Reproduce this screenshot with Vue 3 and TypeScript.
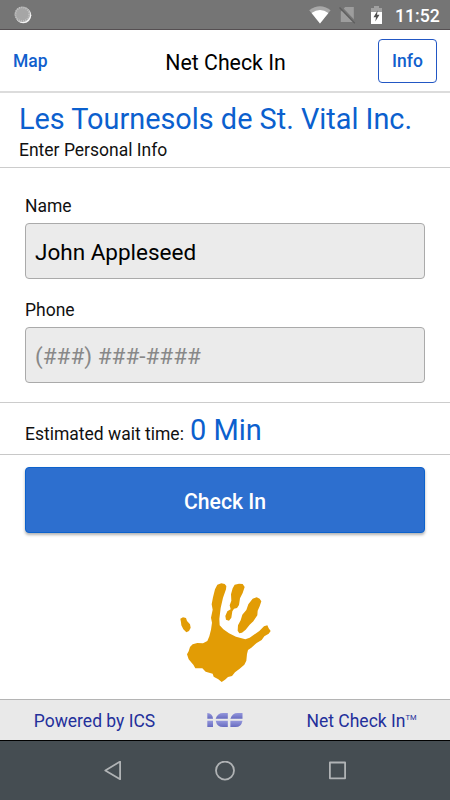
<script setup lang="ts">
import { ref } from 'vue'

const name = ref('John Appleseed')
const phone = ref('')
const waitMinutes = ref(0)
</script>

<template>
  <div class="screen">
    <div class="status">
      <svg class="sync" width="18" height="18" viewBox="0 0 18 18">
        <circle cx="9.3" cy="9.3" r="8" fill="#f5f5f5" />
        <circle cx="8.3" cy="8.3" r="7.8" fill="#a6a6a6" />
        <circle cx="8.3" cy="8.3" r="6.8" fill="none" stroke="#c4c4c4" stroke-width="1.6" stroke-dasharray="1 1.2" />
      </svg>
      <div class="status-icons">
        <svg width="22" height="18" viewBox="0 0 22 18">
          <path d="M0.2 4.2Q11-3.6 21.6 4.2L11 17.4Z" fill="#a8a8a8" />
          <path d="M2.6 7Q11 1.2 19.4 7L11 17.4Z" fill="#fff" />
        </svg>
        <svg class="sim" width="17" height="18" viewBox="0 0 17 18">
          <path d="M6.2 1H14.8V16H1.8V5.8Z" fill="#9d9d9d" />
          <path d="M1.2 0.3L17.2 17.2" stroke="#757575" stroke-width="2" />
          <path d="M0.5 1.5L15.8 17.3" stroke="#5e5e5e" stroke-width="1.4" />
        </svg>
        <svg class="battery" width="11" height="18" viewBox="0 0 11 18">
          <path d="M3 0H8V2H11V7H0V2H3Z" fill="#a0a0a0" />
          <path d="M0 6H11V18H0Z" fill="#fff" />
          <path d="M6.7 4.2L2.5 11.2H5L4.3 15.6L8.5 8.8H6Z" fill="#505050" />
        </svg>
        <span class="clock">11:52</span>
      </div>
    </div>

    <header class="bar">
      <a class="map">Map</a>
      <h1>Net Check In</h1>
      <button class="info">Info</button>
    </header>

    <section class="place">
      <h2>Les Tournesols de St. Vital Inc.</h2>
      <p>Enter Personal Info</p>
    </section>

    <form class="form" @submit.prevent>
      <label for="name">Name</label>
      <input id="name" v-model="name" type="text" />
      <label for="phone">Phone</label>
      <input id="phone" v-model="phone" type="tel" placeholder="(###) ###-####" />
    </form>

    <section class="wait">
      <span>Estimated wait time:</span>
      <strong>{{ waitMinutes }} Min</strong>
    </section>

    <button class="check">Check In</button>

    <div class="hand">
      <svg width="110" height="115" viewBox="0 0 330 345" fill="#e29c05">
        <path d="M142 29L154 25L164 27L169 33L168 43L159 68L152 99L148 132L149 151L160 163L177 175L198 185L226 193L239 188L268 168L282 154L292 151L296 160L302 168L296 176L283 184L275 195L260 204L244 218L234 225L231 237L229 257L223 269L209 281L195 292L186 303L174 306L165 314L155 321L145 313L131 305L128 296L107 290L97 280L76 280L70 269L56 253L51 238L56 229L60 216L68 208L82 204L99 205L112 198L118 184L123 164L126 143L123 128L128 104L125 88L129 67L135 43Z" />
        <path d="M194 29L207 26L218 27L224 36L218 54L210 70L207 90L201 99L192 101L187 109L184 128L177 137L168 134L166 123L172 109L182 103L179 91L184 77L183 58L188 40Z" />
        <path d="M248 71L260 67L269 71L274 79L269 94L263 107L262 121L250 139L239 149L227 164L216 173L208 175L203 167L204 151L212 136L217 119L229 105L235 88Z" />
        <path d="M31 131L39 127L48 129L51 138L60 148L62 158L57 168L49 172L40 163L34 151L33 142Z" />
      </svg>
    </div>

    <footer class="footer">
      <span>Powered by ICS</span>
      <svg class="logo" width="36" height="14" viewBox="0 0 36 14">
        <defs>
          <linearGradient id="logo-fill" x1="0" y1="0" x2="0" y2="1">
            <stop offset="0" stop-color="#9497dc" />
            <stop offset="1" stop-color="#676bc0" />
          </linearGradient>
        </defs>
        <g fill="url(#logo-fill)">
          <path d="M0.3 0Q5.8 0.5 6 5.8H0.3Z" />
          <path d="M0.3 7.7H6V14H0.3Z" />
          <path d="M20.8 0V5.8H8.7Q10.4 0 16 0Z" />
          <path d="M8.7 7.7H20.8V14H16Q10 14 8.7 7.7Z" />
          <path d="M35.5 0V5.8H23.4Q25.2 0 30.5 0Z" />
          <path d="M23.4 7.7H35.5Q34.3 14 28.7 14H23.4Z" />
        </g>
      </svg>
      <span class="product">Net Check In<sup>TM</sup></span>
    </footer>

    <nav class="nav">
      <svg width="20" height="20" viewBox="0 0 20 20"><path d="M17.1 0.6V18.2L2.3 9.4Z" /></svg>
      <svg width="20" height="20" viewBox="0 0 20 20"><circle cx="10" cy="9.6" r="9" /></svg>
      <svg width="20" height="20" viewBox="0 0 20 20"><rect x="1.9" y="1.5" width="15.2" height="15.8" /></svg>
    </nav>
  </div>
</template>

<style>
body {
  margin: 0;
  background: #fff;
}
</style>

<style scoped>
* {
  box-sizing: border-box;
}
.screen {
  width: 450px;
  height: 800px;
  display: flex;
  flex-direction: column;
  overflow: hidden;
  background: #fff;
  color: #111;
  font-family: Roboto, "Liberation Sans", sans-serif;
}
h1, h2, p {
  margin: 0;
  font-weight: 400;
}
svg {
  display: block;
  flex: none;
}
.status {
  height: 30px;
  flex: none;
  display: flex;
  justify-content: space-between;
  align-items: center;
  padding: 0 10px 0 14px;
  background: #757575;
  border-bottom: 1px solid #554f52;
}
.status-icons {
  display: flex;
  align-items: center;
}
.sim {
  margin-left: 8px;
}
.battery {
  margin-left: 15px;
}
.clock {
  margin-left: 13px;
  padding-top: 2px;
  width: 45px;
  color: #fff;
  font-size: 17.7px;
  font-weight: 500;
  line-height: 20px;
  white-space: nowrap;
}
.status-icons > svg {
  margin-top: 1px;
}
.bar {
  height: 63px;
  flex: none;
  display: grid;
  grid-template-columns: 60px 1fr 59px;
  align-items: center;
  padding: 0 13px;
  border-bottom: 2px solid #dcdcdc;
}
.map {
  color: #115fcd;
  font-size: 17.5px;
  font-weight: 500;
}
h1 {
  padding-top: 4px;
  color: #000;
  font-size: 21.3px;
  line-height: 26px;
  text-align: center;
}
.info {
  width: 59px;
  height: 44px;
  margin: 1px 0 0;
  padding: 0;
  border: 1px solid #2257c4;
  border-radius: 4px;
  background: #fff;
  color: #115fcd;
  font: 500 17.5px Roboto, sans-serif;
}
.place {
  height: 75px;
  flex: none;
  padding: 9px 19px 0;
  border-bottom: 1px solid #ccc;
}
h2 {
  color: #0b60ce;
  font-size: 28.85px;
  line-height: 35px;
  white-space: nowrap;
}
.place p {
  font-size: 17.5px;
  line-height: 27px;
}
.form {
  height: 234px;
  flex: none;
  display: flex;
  flex-direction: column;
  padding: 28px 25px 0;
}
label {
  height: 20px;
  margin-bottom: 7px;
  font-size: 17.5px;
  line-height: 21px;
}
input {
  width: 100%;
  height: 56px;
  flex: none;
  margin: 0 0 21px;
  padding: 2px 9px 0;
  border: 1px solid #aaa;
  border-radius: 4px;
  background: #ebebeb;
  color: #000;
  font: 400 22.5px Roboto, sans-serif;
  outline: none;
}
input::placeholder {
  color: #888;
  opacity: 1;
}
.wait {
  height: 53px;
  flex: none;
  display: flex;
  align-items: baseline;
  gap: 6px;
  padding: 10px 25px 0;
  border-top: 1px solid #ccc;
  border-bottom: 1px solid #c8c8c8;
  font-size: 17.5px;
}
.wait strong {
  color: #0b60ce;
  font-size: 29px;
  font-weight: 400;
  line-height: 35px;
}
.check {
  height: 66px;
  flex: none;
  margin: 12px 25px 0;
  padding: 2px 0 0;
  border: 1px solid #0d62cc;
  border-radius: 4px;
  background: #2d6fcf;
  box-shadow: 0 2px 3px rgba(0, 0, 0, 0.3);
  color: #fff;
  font: 500 21.2px Roboto, sans-serif;
}
.hand {
  flex: 1;
  display: flex;
  justify-content: center;
  padding-top: 42px;
}
.footer {
  height: 41px;
  flex: none;
  display: grid;
  grid-template-columns: 1fr 72px 1fr;
  align-items: center;
  justify-items: center;
  border-top: 1px solid #b4b4b4;
  background: #e9e9e9;
  color: #24309b;
  font-size: 17.5px;
  line-height: 20px;
}
.footer span {
  padding-top: 2px;
}
.footer .product {
  padding-left: 12px;
}
sup {
  font-size: 7.5px;
  line-height: 0;
  vertical-align: 7px;
}
.nav {
  height: 60px;
  flex: none;
  display: flex;
  justify-content: center;
  align-items: center;
  gap: 92.5px;
  border-top: 1px solid #000;
  background: #454d52;
}
.nav svg {
  fill: none;
  stroke: #b0b3b5;
  stroke-width: 1.8;
  stroke-linejoin: round;
}
</style>
